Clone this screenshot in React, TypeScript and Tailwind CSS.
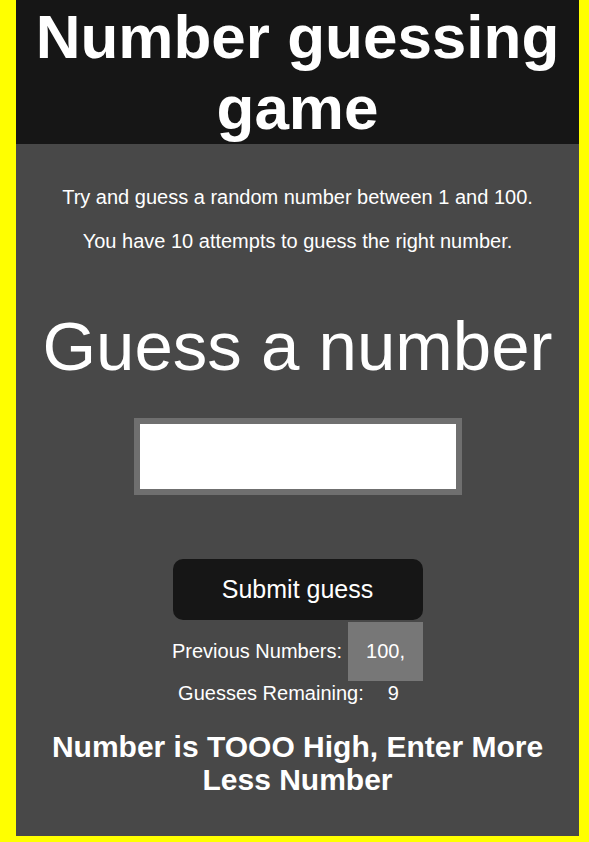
const App = () => {
  return (
    <div className="min-h-screen bg-[#ffff00] pl-4 pr-[10px] pb-[6px] font-['Liberation_Sans',Arial,sans-serif] text-white">
      <div className="flex flex-col items-center bg-[#484848] text-center h-[836px]">
        <header className="w-full bg-[#161616] py-px">
          <h1 className="text-[62px] font-bold leading-[71px]">Number guessing game</h1>
        </header>

        <p className="mt-[42px] text-[20px] leading-[23px]">Try and guess a random number between 1 and 100.</p>
        <p className="mt-[21px] text-[20px] leading-[23px]">You have 10 attempts to guess the right number.</p>

        <h2 className="mt-[55px] text-[69px] leading-[78px]">Guess a number</h2>

        <input
          type="text"
          className="mt-[32px] h-[77px] w-[328px] border-[6px] border-[#6f6f6f] bg-white text-black outline-none"
        />

        <button className="mt-16 h-[61px] w-[250px] rounded-[10px] bg-[#161616] text-[25px] text-white">
          Submit guess
        </button>

        <div className="mt-[2px] flex items-center text-[20px] leading-[23px]">
          <span>Previous Numbers:</span>
          <span className="ml-[6px] bg-[#777777] px-[18px] py-[18px]">100,</span>
        </div>
        <div className="mt-px flex items-center text-[20px] leading-[23px]">
          <span>Guesses Remaining:</span>
          <span className="ml-[6px] px-[18px]">9</span>
        </div>

        <p className="mt-[25px] px-6 text-[30px] font-bold leading-[33px]">
          Number is TOOO High, Enter More Less Number
        </p>
      </div>
    </div>
  );
};

export default App;
